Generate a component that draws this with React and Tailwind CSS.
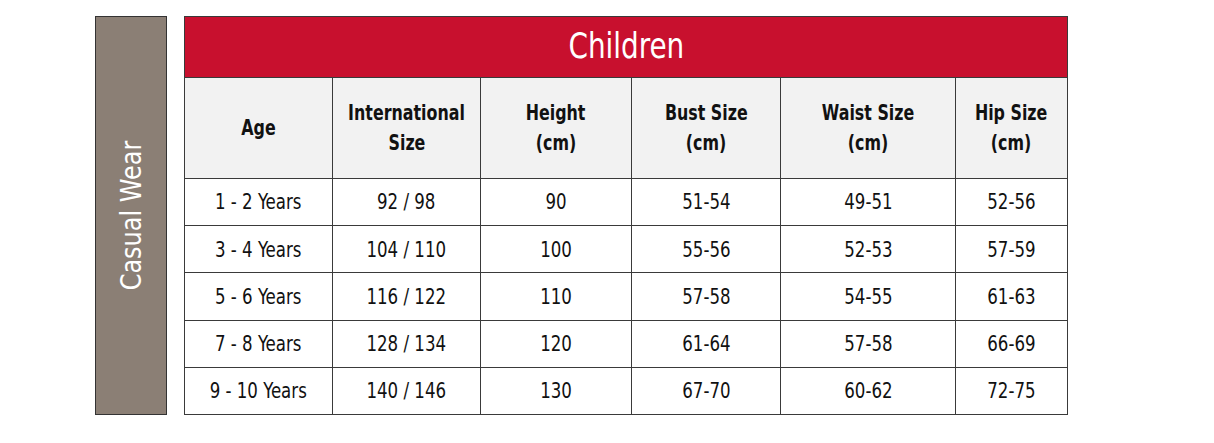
import React from "react";

const cols = [
  { label: ["Age"], w: "w-[148px]" },
  { label: ["International", "Size"], w: "w-[148px]" },
  { label: ["Height", "(cm)"], w: "w-[151px]" },
  { label: ["Bust Size", "(cm)"], w: "w-[149px]" },
  { label: ["Waist Size", "(cm)"], w: "w-[175px]" },
  { label: ["Hip Size", "(cm)"], w: "flex-1" },
];

const rows = [
  ["1 - 2 Years", "92 / 98", "90", "51-54", "49-51", "52-56"],
  ["3 - 4 Years", "104 / 110", "100", "55-56", "52-53", "57-59"],
  ["5 - 6 Years", "116 / 122", "110", "57-58", "54-55", "61-63"],
  ["7 - 8 Years", "128 / 134", "120", "61-64", "57-58", "66-69"],
  ["9 - 10 Years", "140 / 146", "130", "67-70", "60-62", "72-75"],
];

const font = "font-['Liberation_Sans_Narrow','DejaVu_Sans_Condensed',sans-serif]";

export default function App() {
  return (
    <div className={`w-[1214px] h-[443px] bg-white flex pt-[16px] pl-[95px] ${font}`}>
      {/* side label */}
      <div className="w-[72px] h-[399px] bg-[#8b7f75] border border-[#333] flex items-center justify-center">
        <span className="-rotate-90 whitespace-nowrap text-white text-[29px] leading-none">
          <span className="inline-block scale-x-[0.92]">Casual Wear</span>
        </span>
      </div>

      {/* table */}
      <div className="ml-[17px] w-[884px] h-[399px] border border-[#3a3a3a] flex flex-col">
        <div className="h-[61px] bg-[#c8102e] border-b border-[#3a3a3a] flex items-center justify-center text-white text-[36px] leading-none pb-[2px]">
          <span className="inline-block scale-x-[0.86]">Children</span>
        </div>
        <div className="h-[101px] bg-[#f2f2f2] border-b border-[#3a3a3a] flex">
          {cols.map((c, i) => (
            <div
              key={i}
              className={`${c.w} ${i < cols.length - 1 ? "border-r border-[#3a3a3a]" : ""} flex flex-col items-center justify-center font-bold text-[21px] leading-[30px] text-[#111]`}
            >
              {c.label.map((l) => (
                <span key={l} className="inline-block whitespace-nowrap scale-x-[0.84]">{l}</span>
              ))}
            </div>
          ))}
        </div>
        {rows.map((r, ri) => (
          <div
            key={ri}
            className={`flex-1 flex ${ri < rows.length - 1 ? "border-b border-[#3a3a3a]" : ""}`}
          >
            {r.map((v, i) => (
              <div
                key={i}
                className={`${cols[i].w} ${i < r.length - 1 ? "border-r border-[#3a3a3a]" : ""} flex items-center justify-center text-[21px] text-[#111] pt-[2px]`}
              >
                <span className="inline-block whitespace-nowrap scale-x-[0.88]">{v}</span>
              </div>
            ))}
          </div>
        ))}
      </div>
    </div>
  );
}
